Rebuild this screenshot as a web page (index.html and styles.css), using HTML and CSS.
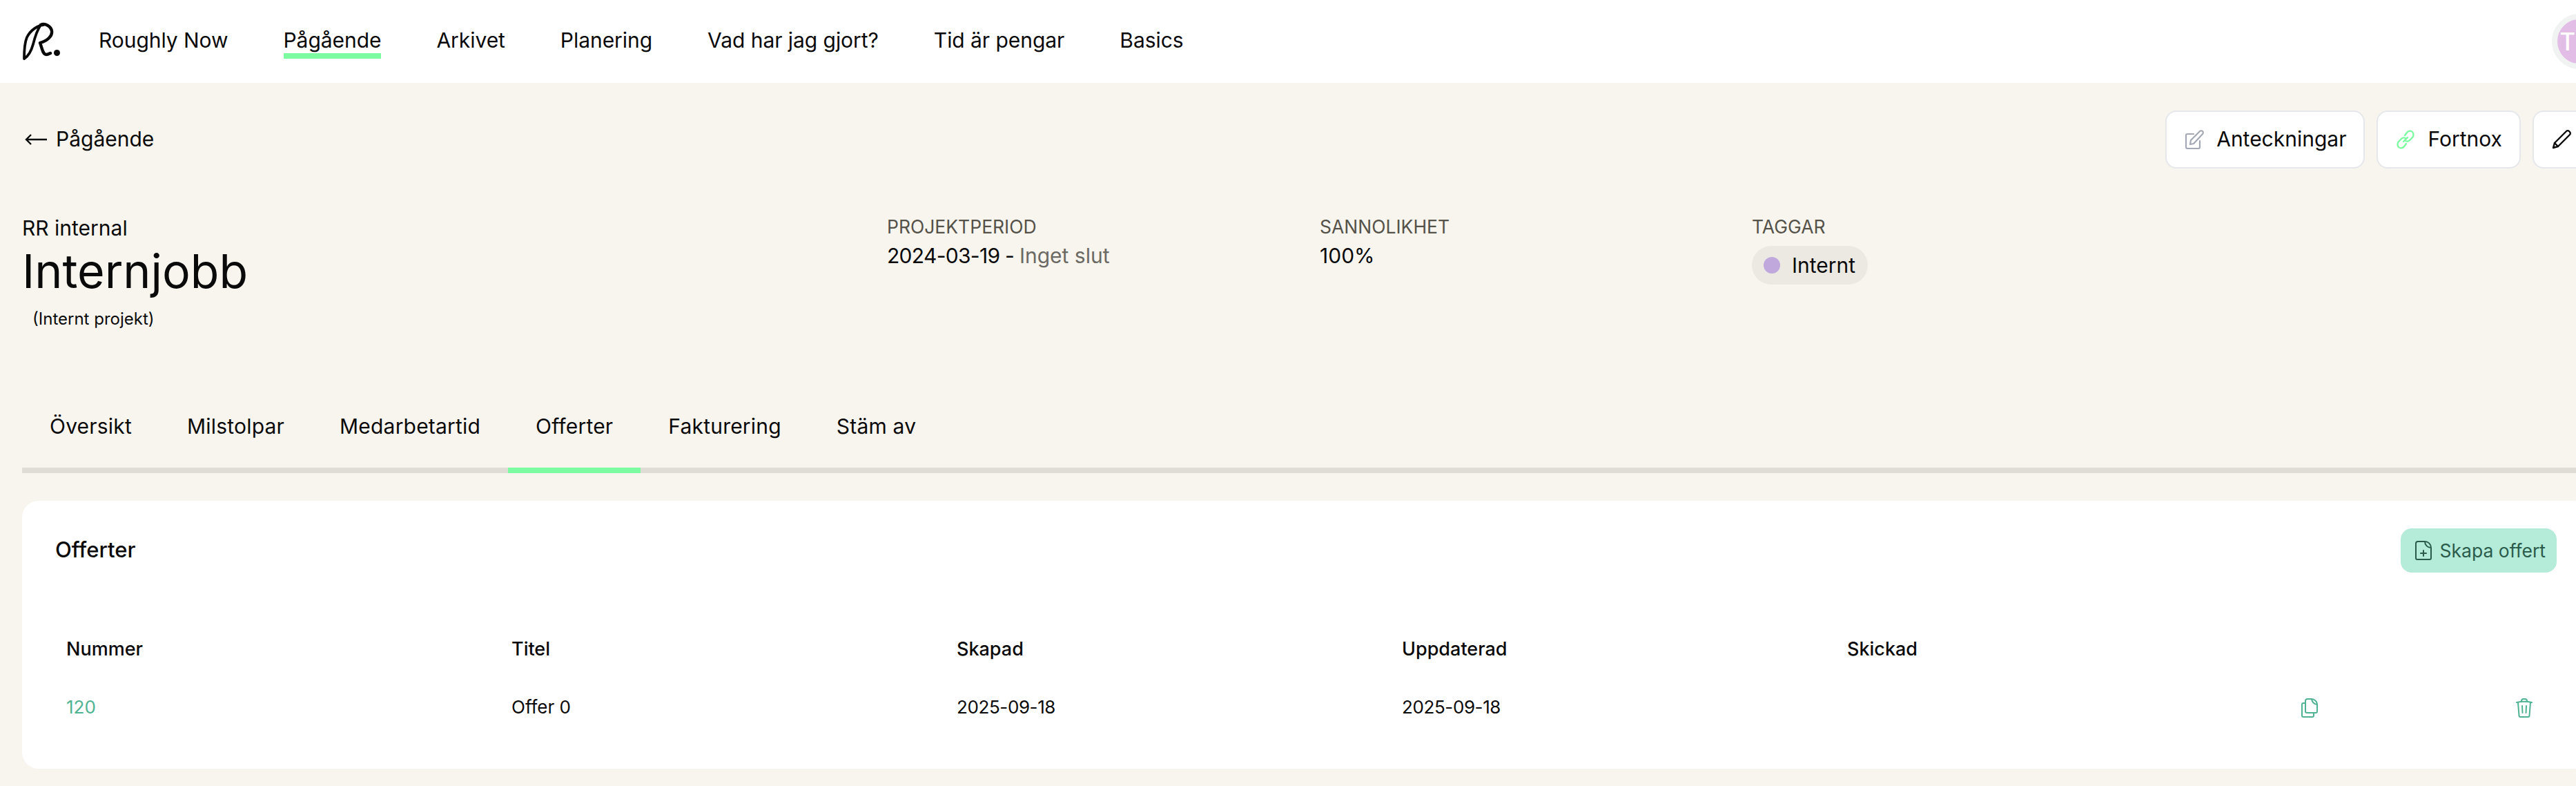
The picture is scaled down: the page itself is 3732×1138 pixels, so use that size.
FILE: index.html
```html
<!DOCTYPE html>
<html lang="sv">
<head>
  <meta charset="UTF-8" />
  <title>Internjobb</title>
  <link rel="stylesheet" href="styles.css">
</head>
<body>
  <div class="page">

    <!-- TOP NAV -->
    <header class="topbar">
      <svg class="logo" viewBox="0 0 56 56" fill="none" stroke="#0a0a0a" stroke-width="3.8" stroke-linecap="round" stroke-linejoin="round">
        <path d="M31 4C22 5 12 12 7 22C4 29 3 42 3 53C8 50 13 43 16 32C18 24 21 13 27 4"/>
        <path d="M27 4C33 1 42 6 43 13C44 20 37 27 26 30C29 38 30 47 35 47C37 47 39 46 41 45" stroke-width="4.4"/>
        <circle cx="50.500" cy="44.500" r="4.500" fill="#0a0a0a" stroke="none"/>
      </svg>
      <nav class="topnav">
        <a>Roughly Now</a>
        <a class="active">Pågående</a>
        <a>Arkivet</a>
        <a>Planering</a>
        <a>Vad har jag gjort?</a>
        <a>Tid är pengar</a>
        <a>Basics</a>
      </nav>
      <div class="avatar"><span>TV</span></div>
    </header>

    <!-- TOOLBAR -->
    <div class="toolbar">
      <a class="back">
        <svg class="back-arrow" viewBox="0 0 32 20" fill="none" stroke="#0a0a0a" stroke-width="2.4"><path d="M32 10H2M9 3l-7 7 7 7"/></svg>
        <span class="label">Pågående</span>
      </a>
      <div class="actions">
        <button class="btn">
          <svg class="icon" viewBox="0 0 28 28" fill="none" stroke="#a3a8b4" stroke-width="2.2" stroke-linecap="round" stroke-linejoin="round"><path d="M13 6H4a2 2 0 0 0-2 2v17a2 2 0 0 0 2 2h16a2 2 0 0 0 2-2v-9"/><path d="M8 21l1-6L22 2c1-1 3-1 4 0s1 3 0 4L13 20z"/></svg>
          <span class="label">Anteckningar</span>
        </button>
        <button class="btn">
          <svg class="icon" viewBox="0 0 28 28" fill="none" stroke="#7cfba1" stroke-width="2.4" stroke-linecap="round" stroke-linejoin="round"><path d="M11 17l6-6"/><path d="M13 8l3-4c2-3 6-3 8-1s2 6 0 8l-4 4c-2 2-5 2-7 0"/><path d="M15 20l-3 4c-2 3-6 3-8 1s-2-6 0-8l4-4c2-2 5-2 7 0"/></svg>
          <span class="label">Fortnox</span>
        </button>
        <button class="btn">
          <svg class="icon" viewBox="0 0 28 28" fill="none" stroke="#0a0a0a" stroke-width="2.4" stroke-linecap="round" stroke-linejoin="round"><path d="M2 26l2-7L21 2c1-1 3-1 4 0l1 1c1 1 1 3 0 4L9 24z"/><path d="M4 19l5 5"/></svg>
        </button>
      </div>
    </div>

    <!-- PROJECT HEAD -->
    <section class="project">
      <div class="project-title">
        <div class="client">RR internal</div>
        <h1>Internjobb</h1>
        <div class="kind">(Internt projekt)</div>
      </div>
      <div class="meta">
        <div class="meta-label">Projektperiod</div>
        <div class="meta-value"><span class="date">2024-03-19 - </span><span class="muted">Inget slut</span></div>
      </div>
      <div class="meta">
        <div class="meta-label">Sannolikhet</div>
        <div class="meta-value">100%</div>
      </div>
      <div class="meta">
        <div class="meta-label">Taggar</div>
        <div class="tag"><span class="tag-dot"></span>Internt</div>
      </div>
    </section>

    <!-- TABS -->
    <nav class="tabs">
      <a>Översikt</a>
      <a>Milstolpar</a>
      <a>Medarbetartid</a>
      <a class="active">Offerter</a>
      <a>Fakturering</a>
      <a>Stäm av</a>
    </nav>

    <!-- OFFERS -->
    <section class="card">
      <div class="card-head">
        <h2>Offerter</h2>
        <button class="btn-create">
          <svg class="icon" viewBox="0 0 24 28" fill="none" stroke="#2b5c4b" stroke-width="2" stroke-linecap="round" stroke-linejoin="round"><path d="M14 1H4a3 3 0 0 0-3 3v21a2 2 0 0 0 2 2h18a2 2 0 0 0 2-2V10c-5 0-9-4-9-9c5 0 9 4 9 9"/><path d="M12 14v8M8 18h8"/></svg>
          Skapa offert
        </button>
      </div>
      <div class="table">
        <div class="cell head">Nummer</div>
        <div class="cell head">Titel</div>
        <div class="cell head">Skapad</div>
        <div class="cell head">Uppdaterad</div>
        <div class="cell head">Skickad</div>
        <div class="cell"></div>
        <div class="cell"></div>
        <div class="cell link">120</div>
        <div class="cell">Offer 0</div>
        <div class="cell date">2025-09-18</div>
        <div class="cell date">2025-09-18</div>
        <div class="cell"></div>
        <div class="cell">
          <svg class="icon-sm" viewBox="0 0 24 28" fill="none" stroke="#4fb391" stroke-width="2" stroke-linecap="round" stroke-linejoin="round"><path d="M15 1H9a3 3 0 0 0-3 3v15a2 2 0 0 0 2 2h13a2 2 0 0 0 2-2V9c-4 0-8-4-8-8c4 0 8 4 8 8"/><path d="M6 7H3a2 2 0 0 0-2 2v16a2 2 0 0 0 2 2h13a2 2 0 0 0 2-2v-4"/></svg>
        </div>
        <div class="cell">
          <svg class="icon-sm" viewBox="0 0 24 28" fill="none" stroke="#4fb391" stroke-width="2" stroke-linecap="round" stroke-linejoin="round"><path d="M1 6c7-1.500 15-1.500 22 0"/><path d="M8 4.500V4a3 3 0 0 1 3-3h2a3 3 0 0 1 3 3v.5"/><path d="M3 6l1.500 19a2 2 0 0 0 2 2h11a2 2 0 0 0 2-2L21 6"/><path d="M9 11l.5 10M15 11l-.5 10"/></svg>
        </div>
      </div>
    </section>

  </div>
</body>
</html>
```

FILE: styles.css
```css
html, body {
  margin: 0;
  padding: 0;
  overflow: hidden;
  background: #f7f5ee;
}
body {
  font-family: Inter, "Liberation Sans", sans-serif;
  font-size: 30px;
  color: #0a0a0a;
}
.page {
  width: 3784px;
}
h1, h2 {
  margin: 0;
  font-weight: 400;
}
button {
  font: inherit;
  color: inherit;
}
.label {
  padding-bottom: 3px;
}

.topbar {
  height: 120px;
  box-sizing: border-box;
  padding: 0 7px 0 32px;
  background: #fff;
  display: flex;
  align-items: center;
}
.logo {
  width: 56px;
  height: 56px;
  flex: none;
}
.topnav {
  display: flex;
  gap: 80px;
  margin-left: 55px;
  letter-spacing: -0.05px;
}
.topnav a {
  position: relative;
  line-height: 40px;
  padding-bottom: 4px;
}
.topnav a.active::after {
  content: "";
  position: absolute;
  left: 0;
  right: 0;
  bottom: -3px;
  height: 8px;
  background: #7cfba1;
}
.avatar {
  margin-left: auto;
  width: 64px;
  height: 64px;
  border: 8px solid #f1f3f2;
  border-radius: 50%;
  background: #e2bee6;
  color: #fff;
  display: flex;
  align-items: center;
  justify-content: center;
  font-size: 35px;
  font-weight: 500;
  letter-spacing: 5px;
}

.toolbar {
  display: flex;
  justify-content: space-between;
  align-items: center;
  padding: 40px 32px 0 36px;
}
.back {
  display: flex;
  align-items: center;
  gap: 13px;
}
.back-arrow {
  width: 32px;
  height: 20px;
}
.actions {
  display: flex;
  gap: 17px;
}
.btn {
  height: 84px;
  box-sizing: border-box;
  padding: 0 25px 0 26px;
  background: #fff;
  border: 2px solid #e5e7eb;
  border-radius: 16px;
  display: flex;
  align-items: center;
  gap: 18px;
}
.icon {
  width: 28px;
  height: 28px;
  flex: none;
}

.project {
  display: grid;
  grid-template-columns: 1253px 627px 626px 1fr;
  padding: 70px 32px 0;
}
.client {
  line-height: 32px;
}
h1 {
  font-size: 68px;
  line-height: 84px;
  margin-top: 4px;
}
.kind {
  font-size: 24px;
  line-height: 32px;
  margin: 12px 0 0 15px;
}
.meta-label {
  font-size: 26.5px;
  line-height: 28px;
  text-transform: uppercase;
  color: #55524a;
}
.meta-value {
  margin-top: 10px;
  line-height: 36px;
}
.date {
  letter-spacing: -0.7px;
}
.muted {
  color: #6b6963;
}
.tag {
  margin-top: 14px;
  width: 168px;
  height: 56px;
  box-sizing: border-box;
  padding-left: 17px;
  border-radius: 28px;
  background: #ebe9e2;
  display: flex;
  align-items: center;
  gap: 17px;
}
.tag-dot {
  width: 24px;
  height: 24px;
  border-radius: 50%;
  background: #c0a8dc;
}

.tabs {
  display: flex;
  margin: 123px 32px 0;
  border-bottom: 8px solid #dedcd5;
  letter-spacing: 0.2px;
}
.tabs a {
  position: relative;
  padding: 0 40px;
  height: 76px;
  line-height: 33px;
}
.tabs a.active::after {
  content: "";
  position: absolute;
  left: 0;
  right: 0;
  bottom: -8px;
  height: 8px;
  background: #7cfba1;
}

.card {
  margin: 40px 32px 0;
  height: 388px;
  background: #fff;
  border-radius: 24px;
}
.card-head {
  display: flex;
  justify-content: space-between;
  align-items: center;
  padding: 40px 48px 0;
}
h2 {
  font-size: 31px;
  font-weight: 500;
  padding-bottom: 4px;
}
.btn-create {
  height: 64px;
  box-sizing: border-box;
  padding: 0 16px 0 21px;
  border: none;
  border-radius: 16px;
  background: #b4ebd9;
  color: #2b5c4b;
  font-size: 26.5px;
  display: flex;
  align-items: center;
  gap: 12px;
}
.btn-create .icon {
  width: 24px;
}

.table {
  display: grid;
  grid-template-columns: 645px 645px 645px 645px 658px 311px 1fr;
  margin: 68px 0 0 64px;
  font-size: 26px;
}
.cell {
  height: 84px;
  display: flex;
  align-items: center;
}
.cell.head {
  font-size: 27px;
  font-weight: 500;
}
.cell.date {
  letter-spacing: -0.4px;
}
.link {
  color: #4fb391;
}
.icon-sm {
  width: 24px;
  height: 28px;
  margin-top: 4px;
}
```
